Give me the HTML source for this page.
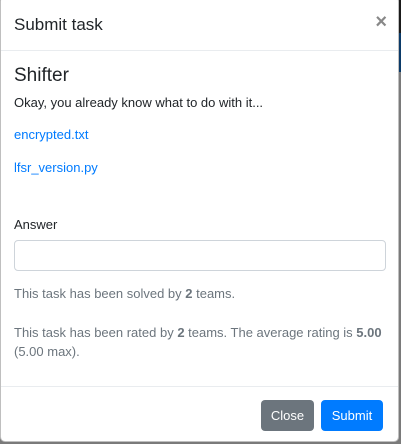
<!DOCTYPE html><html><head><style>
body{margin:0;width:401px;height:444px;position:relative;overflow:hidden;font-family:"Liberation Sans",sans-serif;background:#7a7a7a}
.bg1{position:absolute;left:0;top:0;width:401px;height:33px;background:#1a1a1a}
.bg2{position:absolute;left:0;top:33px;width:401px;height:39px;background:#0b3a68}
.m{position:absolute;left:0px;top:-4px;width:399px;height:446px;background:#fff;border:1px solid rgba(0,0,0,.25);border-radius:5px;box-sizing:border-box}
.h{position:absolute;left:0;top:0;width:100%;height:53px;border-bottom:1px solid #e9ecef}
.t{position:absolute;left:13px;top:18px;font-size:17px;color:#212529}
.x{position:absolute;right:11px;top:14px;font-size:20px;font-weight:bold;color:#888}
.a{position:absolute;left:13px;font-size:13px}
.f{position:absolute;left:0;top:389px;width:100%;border-top:1px solid #e9ecef}
.b{position:absolute;top:403px;height:31px;border-radius:4px;color:#fff;font-size:13px;line-height:31px;text-align:center}
</style></head><body>
<div class="bg1"></div><div class="bg2"></div>
<div class="m">
<div class="h"><div class="t">Submit task</div><div class="x">×</div></div>
<div class="a" style="top:68px;font-size:19px;color:#212529">Shifter</div>
<div class="a" style="top:98px;color:#212529">Okay, you already know what to do with it...</div>
<div class="a" style="top:130px;color:#007bff">encrypted.txt</div>
<div class="a" style="top:163px;color:#007bff">lfsr_version.py</div>
<div class="a" style="top:220px;color:#212529">Answer</div>
<div style="position:absolute;left:13px;top:243px;width:372px;height:31px;border:1px solid #ced4da;border-radius:4px;box-sizing:border-box"></div>
<div class="a" style="top:289px;color:#6c757d">This task has been solved by <b>2</b> teams.</div>
<div class="a" style="top:326px;color:#6c757d;line-height:19px;width:380px">This task has been rated by <b>2</b> teams. The average rating is <b>5.00</b><br>(5.00 max).</div>
<div class="f"></div>
<div class="b" style="left:260px;width:53px;background:#6c757d">Close</div>
<div class="b" style="left:320px;width:62px;background:#007bff">Submit</div>
</div>
</body></html>
